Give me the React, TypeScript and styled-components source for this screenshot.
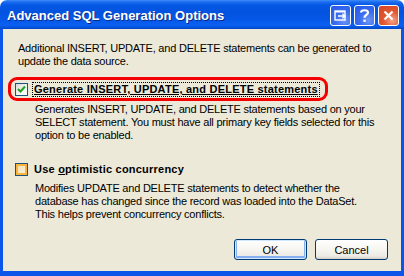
import React from "react";
import styled, { createGlobalStyle, css } from "styled-components";

// ------------------- Global -------------------

const GlobalStyle = createGlobalStyle`
  html, body {
    margin: 0;
    padding: 0;
    background: #ffffff;
  }
  body {
    font-family: "Liberation Sans", "DejaVu Sans", sans-serif;
    font-size: 11px;
    color: #000;
  }
`;

// ------------------- Window chrome -------------------

const Window = styled.div`
  width: 404px;
  height: 276px;
  display: flex;
  flex-direction: column;
  box-sizing: border-box;
`;

const TitleBar = styled.div`
  height: 29px;
  flex: none;
  display: flex;
  align-items: center;
  padding: 0 5px 0 7px;
  border-radius: 7px 7px 0 0;
  background: linear-gradient(
    to bottom,
    #3d8cf7 0px,
    #1d6cf0 2px,
    #0458e3 5px,
    #0453e0 12px,
    #0558e8 20px,
    #0b60f2 25px,
    #0450d8 28px,
    #0342c0 29px
  );
  box-sizing: border-box;
`;

const Title = styled.div`
  flex: 1;
  color: #fff;
  font-family: "Liberation Sans", "DejaVu Sans", sans-serif;
  font-weight: bold;
  font-size: 13px;
  padding-top: 2px;
  text-shadow: 1px 1px 0 #0a2a8a;
  white-space: nowrap;
`;

const TitleButtons = styled.div`
  display: flex;
  gap: 3px;
  padding-top: 2px;
`;

const TitleButton = styled.div<{ $close?: boolean }>`
  width: 21px;
  height: 21px;
  box-sizing: border-box;
  border: 1px solid #fff;
  border-radius: 3px;
  display: flex;
  align-items: center;
  justify-content: center;
  color: #fff;
  background: radial-gradient(
    circle at 70% 75%,
    #6e97f4 0%,
    #3a6cf0 45%,
    #2258e6 100%
  );
  ${(p) =>
    p.$close &&
    css`
      background: radial-gradient(
        circle at 70% 75%,
        #f3a58a 0%,
        #e2572f 45%,
        #d0432a 100%
      );
    `}
`;

const Frame = styled.div`
  flex: 1;
  display: flex;
  flex-direction: column;
  border: solid #0b55e8;
  border-width: 0 3px 5px 3px;
  box-shadow: inset 0 0 0 1px #1660ee;
  background: #0b55e8;
`;

// ------------------- Client area -------------------

const Client = styled.div`
  flex: 1;
  position: relative;
  display: flex;
  flex-direction: column;
  background: #ece9d8;
  padding: 13px 13px 11px 12px;
  line-height: 13px;
`;

const Intro = styled.p`
  margin: 0;
  padding-left: 3px;
  white-space: nowrap;
  letter-spacing: -0.22px;
`;

const OptionRow = styled.div<{ $gap: number }>`
  position: relative;
  display: flex;
  align-items: center;
  gap: 4px;
  height: 15px;
  margin-top: ${(p) => p.$gap}px;
`;

const Highlight = styled.div`
  position: absolute;
  left: -7px;
  top: -5px;
  width: 320px;
  height: 24px;
  box-sizing: border-box;
  border: 3px solid #f40000;
  border-radius: 9px;
  pointer-events: none;
`;

const Box = styled.div<{ $hover?: boolean }>`
  width: 13px;
  height: 13px;
  box-sizing: border-box;
  border: 1px solid #1c5180;
  background: linear-gradient(135deg, #dcdcd7 0%, #f5f5f2 60%, #ffffff 100%);
  display: flex;
  align-items: center;
  justify-content: center;
  ${(p) =>
    p.$hover &&
    css`
      box-shadow: inset 0 0 0 2px #f8b53a;
      background: linear-gradient(135deg, #f4dcb1 0%, #fdf3e0 100%);
    `}
`;

const Label = styled.span<{ $focused?: boolean; $underline?: boolean }>`
  font-weight: bold;
  padding: 0 1px;
  line-height: 13px;
  letter-spacing: 0.22px;
  border: 1px dotted transparent;
  white-space: nowrap;
  ${(p) =>
    p.$focused &&
    css`
      border-color: #000;
    `}
  ${(p) =>
    p.$underline &&
    css`
      text-decoration: underline;
    `}
`;

const Description = styled.p<{ $gap: number }>`
  margin: ${(p) => p.$gap}px 0 0 20px;
  white-space: nowrap;
  letter-spacing: -0.22px;
`;

const ButtonRow = styled.div`
  margin-top: auto;
  display: flex;
  justify-content: flex-end;
  gap: 8px;
`;

const PushButton = styled.button<{ $default?: boolean }>`
  width: 73px;
  height: 21px;
  box-sizing: border-box;
  border: 1px solid #003c74;
  border-radius: 3px;
  font-family: "Liberation Sans", "DejaVu Sans", sans-serif;
  font-size: 11px;
  color: #000;
  padding: 0;
  background: linear-gradient(to bottom, #ffffff 0%, #f6f5f0 50%, #ecebe4 85%, #d6d0c5 100%);
  ${(p) =>
    p.$default &&
    css`
      box-shadow: inset 0 0 0 1px #cee7ff, inset 0 -1px 0 2px #88b0f0;
    `}
`;

function CheckMark(): JSX.Element {
  return (
    <svg width="9" height="9" viewBox="0 0 9 9">
      <path d="M1 4 L3.5 6.5 L8 1.5" fill="none" stroke="#21a121" strokeWidth="2" />
    </svg>
  );
}

export default function App(): JSX.Element {
  return (
    <Window>
      <GlobalStyle />
      <TitleBar>
        <Title>Advanced SQL Generation Options</Title>
        <TitleButtons>
          <TitleButton>
            <svg width="13" height="11" viewBox="0 0 13 11">
              <rect x="1" y="1" width="10" height="9" fill="none" stroke="#fff" strokeWidth="1.4" />
              <rect x="1" y="1" width="10" height="1.5" fill="#fff" />
              <path d="M4 6 H11 M8.5 3.8 L11 6 L8.5 8.2" fill="none" stroke="#fff" strokeWidth="1.4" />
            </svg>
          </TitleButton>
          <TitleButton>
            <svg width="11" height="15" viewBox="0 0 11 15">
              <path
                d="M2 4.5 C2 1.5 9 1.5 9 4.5 C9 7 5.5 7 5.5 9.8"
                fill="none"
                stroke="#fff"
                strokeWidth="2.2"
              />
              <rect x="4.4" y="11.6" width="2.3" height="2.3" fill="#fff" />
            </svg>
          </TitleButton>
          <TitleButton $close>
            <svg width="11" height="11" viewBox="0 0 11 11">
              <path d="M1.5 1.5 L9.5 9.5 M9.5 1.5 L1.5 9.5" stroke="#fff" strokeWidth="2.2" />
            </svg>
          </TitleButton>
        </TitleButtons>
      </TitleBar>
      <Frame>
        <Client>
          <Intro>
            Additional INSERT, UPDATE, and DELETE statements can be generated to
            <br />
            update the data source.
          </Intro>

          <OptionRow $gap={14}>
            <Highlight />
            <Box>
              <CheckMark />
            </Box>
            <Label $focused $underline>
              Generate INSERT, UPDATE, and DELETE statements
            </Label>
          </OptionRow>
          <Description $gap={6}>
            Generates INSERT, UPDATE, and DELETE statements based on your
            <br />
            SELECT statement. You must have all primary key fields selected for this
            <br />
            option to be enabled.
          </Description>

          <OptionRow $gap={20}>
            <Box $hover />
            <Label>
              Use <u>o</u>ptimistic concurrency
            </Label>
          </OptionRow>
          <Description $gap={5}>
            Modifies UPDATE and DELETE statements to detect whether the
            <br />
            database has changed since the record was loaded into the DataSet.
            <br />
            This helps prevent concurrency conflicts.
          </Description>

          <ButtonRow>
            <PushButton $default>OK</PushButton>
            <PushButton>Cancel</PushButton>
          </ButtonRow>
        </Client>
      </Frame>
    </Window>
  );
}
